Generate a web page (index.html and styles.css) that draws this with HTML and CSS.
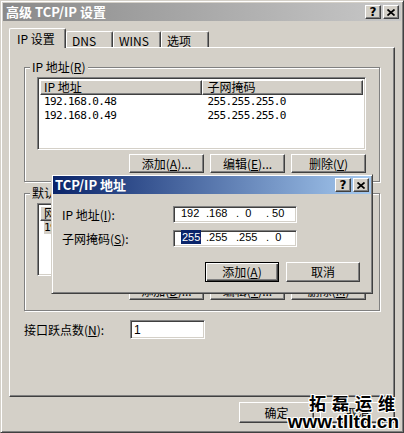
FILE: index.html
```html
<!DOCTYPE html>
<html lang="zh-CN">
  <head>
    <meta charset="UTF-8" />
    <title>高级 TCP/IP 设置</title>
    <link rel="stylesheet" href="styles.css">
  </head>

  <body>
    <div class="window">
      <div class="titlebar inactive">
        <span class="title">高级 TCP/IP 设置</span>
        <div class="caption-btns">
          <span class="cbtn">?</span>
          <span class="cbtn"><svg width="8" height="7" viewBox="0 0 8 7"><path d="M0.5 0.5L7.5 6.5M7.5 0.5L0.5 6.5" stroke="#000" stroke-width="1.7" fill="none"/></svg></span>
        </div>
      </div>

      <div class="body">
        <div class="tabs">
          <span class="tab active">IP 设置</span>
          <span class="tab">DNS</span>
          <span class="tab">WINS</span>
          <span class="tab">选项</span>
        </div>

        <div class="panel">
          <fieldset class="group">
            <legend>IP 地址(<u>R</u>)</legend>
            <div class="listview">
              <div class="lv-head">
                <span class="col">IP 地址</span>
                <span class="col">子网掩码</span>
              </div>
              <div class="lv-row">
                <span class="col num">192.168.0.48</span>
                <span class="col num">255.255.255.0</span>
              </div>
              <div class="lv-row">
                <span class="col num">192.168.0.49</span>
                <span class="col num">255.255.255.0</span>
              </div>
            </div>
            <div class="btn-row">
              <button type="button" class="btn">添加(<u>A</u>)...</button>
              <button type="button" class="btn">编辑(<u>E</u>)...</button>
              <button type="button" class="btn">删除(<u>V</u>)</button>
            </div>
          </fieldset>

          <fieldset class="group gateway">
            <legend>默认网关(<u>F</u>):</legend>
            <div class="listview">
              <div class="lv-head">
                <span class="col">网关</span>
                <span class="col">跃点数</span>
              </div>
              <div class="lv-row">
                <span class="col num"><span class="sel">192.168.0.1</span></span>
                <span class="col">自动</span>
              </div>
            </div>
            <div class="btn-row">
              <button type="button" class="btn">添加(<u>D</u>)...</button>
              <button type="button" class="btn">编辑(<u>T</u>)...</button>
              <button type="button" class="btn">删除(<u>M</u>)</button>
            </div>
          </fieldset>

          <div class="metric">
            <span class="metric-label">接口跃点数(<u>N</u>):</span>
            <div class="field">1</div>
          </div>
        </div>

        <div class="footer">
          <button type="button" class="btn big">确定</button>
          <button type="button" class="btn big">取消</button>
        </div>
      </div>

      <div class="dialog">
        <div class="titlebar active">
          <span class="title">TCP/IP 地址</span>
          <div class="caption-btns">
            <span class="cbtn">?</span>
            <span class="cbtn"><svg width="8" height="7" viewBox="0 0 8 7"><path d="M0.5 0.5L7.5 6.5M7.5 0.5L0.5 6.5" stroke="#000" stroke-width="1.7" fill="none"/></svg></span>
          </div>
        </div>
        <div class="dialog-body">
          <div class="form-row">
            <span class="form-label">IP 地址(<u>I</u>):</span>
            <div class="field ip">
              <span class="seg first">192</span>
              <span class="seg">.168</span>
              <span class="seg">.  0</span>
              <span class="seg">. 50</span>
            </div>
          </div>
          <div class="form-row">
            <span class="form-label">子网掩码(<u>S</u>):</span>
            <div class="field ip">
              <span class="seg first"><span class="hl">255</span></span>
              <span class="seg">.255</span>
              <span class="seg">.255</span>
              <span class="seg">.  0</span>
            </div>
          </div>
          <div class="dialog-btns">
            <button type="button" class="btn big default">添加(<u>A</u>)</button>
            <button type="button" class="btn big">取消</button>
          </div>
        </div>
      </div>

      <div class="watermark">
        <span class="wm-cn">拓磊运维</span>
        <span class="wm-url">www.tlltd.cn</span>
      </div>
    </div>
  </body>
</html>
```

FILE: styles.css
```css
* {
  box-sizing: border-box;
}

body {
  margin: 0;
  background: #d4d0c8;
  font: 12px/14px "Noto Sans CJK SC", sans-serif;
  color: #000;
  overflow: hidden;
}

u {
  text-decoration: underline;
}

.window {
  position: relative;
  width: 404px;
  height: 433px;
  padding: 2px;
  background: #d4d0c8;
  border: 1px solid;
  border-color: #d4d0c8 #404040 #404040 #d4d0c8;
  box-shadow: inset 1px 1px #fff, inset -1px -1px #808080;
}

/* title bars */
.titlebar {
  display: flex;
  align-items: center;
  justify-content: space-between;
  height: 18px;
  padding: 0 2px 0 3px;
  color: #fff;
}

.titlebar .title {
  font-weight: bold;
  font-size: 13px;
}

.titlebar.inactive {
  background: linear-gradient(to right, #8a8a8a, #c8c8c8);
}

.titlebar.active {
  padding-left: 2px;
  background: linear-gradient(to right, #0a246a, #a6caf0);
}

.caption-btns {
  display: flex;
  gap: 2px;
}

.cbtn {
  display: flex;
  align-items: center;
  justify-content: center;
  width: 16px;
  height: 14px;
  background: #d4d0c8;
  border: 1px solid;
  border-color: #fff #404040 #404040 #fff;
  box-shadow: inset -1px -1px #808080;
  color: #000;
  font: bold 12px/12px "DejaVu Sans", sans-serif;
}

/* tabs */
.body {
  padding: 7px 6px 0 6px;
}

.tabs {
  display: flex;
  align-items: flex-end;
  height: 19px;
  position: relative;
  z-index: 1;
}

.tab {
  height: 16px;
  padding: 2px 0 0 5px;
  background: #d4d0c8;
  border: 1px solid;
  border-bottom: none;
  border-color: #fff #404040 #404040 #fff;
  border-radius: 2px 2px 0 0;
  box-shadow: inset -1px 0 #808080;
}

.tab:nth-child(2) { width: 47px; }
.tab:nth-child(3) { width: 48px; }
.tab:nth-child(4) { width: 48px; }

.tab.active {
  width: 57px;
  height: 20px;
  margin-bottom: -1px;
  padding: 3px 0 0 7px;
}

.panel {
  height: 350px;
  padding: 12px 14px 0 14px;
  border: 1px solid;
  border-color: #fff #404040 #404040 #fff;
  box-shadow: inset -1px -1px #808080;
}

/* group boxes */
.group {
  margin: 0;
  padding: 3px 13px 8px 12px;
  min-width: 0;
  border: 1px solid #808080;
  box-shadow: inset 1px 1px #fff, 1px 1px #fff;
}

.group legend {
  margin-left: -7px;
  padding: 0 2px;
  background: #d4d0c8;
  line-height: 14px;
}

.group.gateway {
  margin-top: 4px;
  padding-bottom: 10px;
}

.group.gateway .btn-row {
  margin-top: 5px;
}

.listview {
  height: 73px;
  padding: 2px;
  background: #fff;
  border: 1px solid;
  border-color: #808080 #fff #fff #808080;
  box-shadow: inset 1px 1px #404040, inset -1px -1px #d4d0c8;
  overflow: hidden;
}

.lv-head {
  display: flex;
  height: 15px;
}

.lv-head .col {
  width: 162px;
  padding-left: 3px;
  background: #d4d0c8;
  border: 1px solid;
  border-color: #fff #404040 #404040 #fff;
  box-shadow: inset -1px -1px #808080;
  line-height: 12px;
}

.lv-head .col + .col {
  padding-left: 5px;
}

.lv-row {
  display: flex;
  height: 14px;
  align-items: center;
}

.lv-row .col {
  width: 162px;
  padding-left: 4px;
  white-space: nowrap;
}

.lv-row .col + .col {
  padding-left: 6px;
}

.num {
  font-family: "DejaVu Sans Mono", monospace;
  font-size: 11px;
  letter-spacing: -0.6px;
}

.sel {
  background: #d4d0c8;
}

/* buttons */
.btn-row {
  display: flex;
  justify-content: flex-end;
  gap: 6px;
  margin-top: 4px;
}

.btn {
  width: 75px;
  height: 19px;
  padding: 0;
  background: #d4d0c8;
  border: 1px solid;
  border-color: #fff #404040 #404040 #fff;
  box-shadow: inset -1px -1px #808080;
  font: inherit;
  color: #000;
}

.btn.big {
  height: 21px;
}

.btn.default {
  border-color: #000;
  box-shadow: inset 1px 1px #fff, inset -1px -1px #404040, inset -2px -2px #808080;
}

.metric {
  display: flex;
  align-items: center;
  margin-top: 9px;
}

.metric-label {
  width: 106px;
}

.field {
  width: 75px;
  height: 19px;
  padding: 2px 3px;
  background: #fff;
  border: 1px solid;
  border-color: #808080 #fff #fff #808080;
  box-shadow: inset 1px 1px #404040, inset -1px -1px #d4d0c8;
  font-family: "Liberation Sans", sans-serif;
}

.footer {
  display: flex;
  justify-content: flex-end;
  gap: 6px;
  padding-top: 5px;
}

/* modal dialog over the window */
.dialog {
  position: absolute;
  left: 50px;
  top: 173px;
  width: 322px;
  height: 120px;
  padding: 1px;
  background: #d4d0c8;
  border: 1px solid;
  border-color: #d4d0c8 #404040 #404040 #d4d0c8;
  box-shadow: inset 1px 1px #fff, inset -1px -1px #808080;
  z-index: 5;
}

.dialog-body {
  padding: 12px 11px 0 9px;
}

.form-row {
  display: flex;
  align-items: center;
  margin-bottom: 7px;
}

.form-label {
  width: 111px;
}

.field.ip {
  display: flex;
  width: 124px;
  height: 17px;
  padding: 0 1px;
  font-size: 11px;
  line-height: 13px;
}

.seg {
  width: 30px;
  padding-left: 1px;
  white-space: pre;
}

.seg.first {
  padding-left: 6px;
}

.hl {
  padding: 1px 1px;
  background: #0a246a;
  color: #fff;
}

.dialog-btns {
  display: flex;
  justify-content: flex-end;
  gap: 7px;
  padding-top: 8px;
}

.dialog-btns .btn {
  width: 74px;
  height: 20px;
}

/* site watermark stamped on the screenshot */
.watermark {
  position: absolute;
  right: 4px;
  top: 393px;
  display: flex;
  flex-direction: column;
  align-items: flex-end;
  z-index: 6;
  color: #000;
  text-shadow: 1px 0 #fff, -1px 0 #fff, 0 1px #fff, 0 -1px #fff,
    1px 1px #fff, -1px -1px #fff, 1px -1px #fff, -1px 1px #fff;
}

.wm-cn {
  font: bold 17px/18px "Noto Sans CJK SC", sans-serif;
  letter-spacing: 6px;
  margin-right: -2px;
}

.wm-url {
  font: bold 19px/19px "Liberation Sans", sans-serif;
}
```
